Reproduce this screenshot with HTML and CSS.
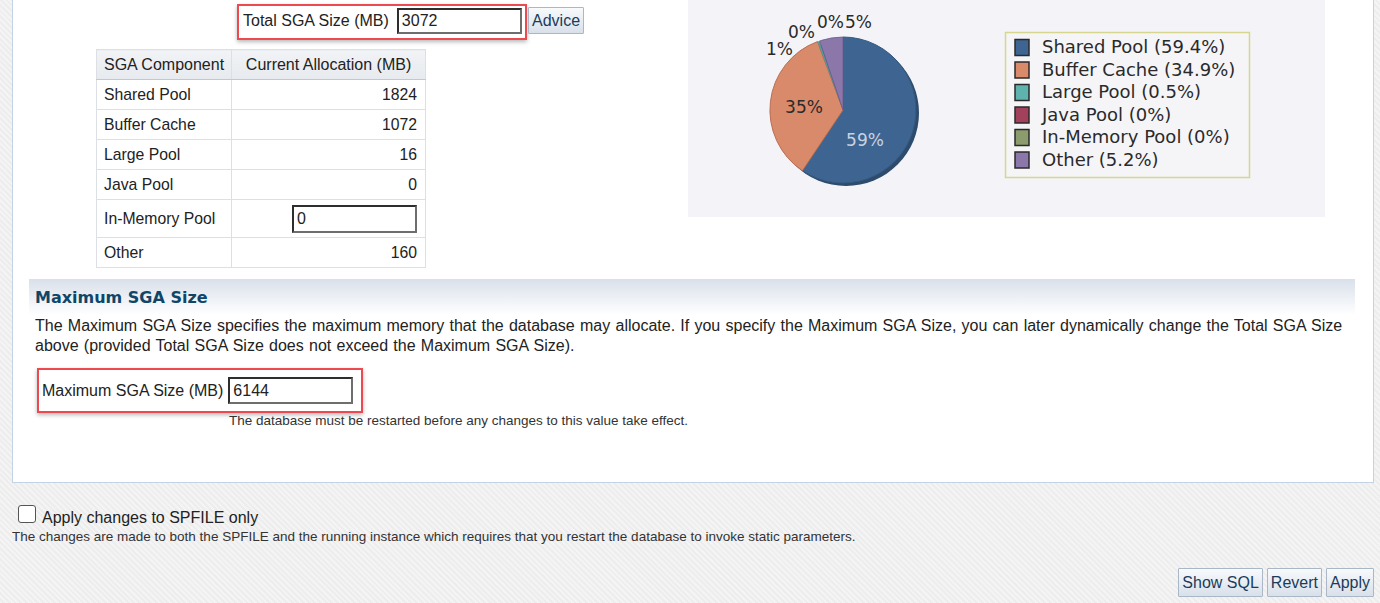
FILE: index.html
```html
<!DOCTYPE html>
<html>
<head>
<meta charset="utf-8">
<link rel="stylesheet" href="styles.css">
</head>
<body>
<div class="panel">
  <div class="top">
    <div class="left">
      <div class="total-row">
        <div class="hl-box total-box">
          <label class="lbl">Total SGA Size (MB)</label>
          <input class="field" type="text" value="3072">
        </div>
        <button class="btn">Advice</button>
      </div>
      <table class="sga">
        <thead>
          <tr><th class="c1">SGA Component</th><th class="c2">Current Allocation (MB)</th></tr>
        </thead>
        <tbody>
          <tr><td>Shared Pool</td><td class="num">1824</td></tr>
          <tr><td>Buffer Cache</td><td class="num">1072</td></tr>
          <tr><td>Large Pool</td><td class="num">16</td></tr>
          <tr><td>Java Pool</td><td class="num">0</td></tr>
          <tr class="tall"><td>In-Memory Pool</td><td class="num"><input class="field cell-field" type="text" value="0"></td></tr>
          <tr><td>Other</td><td class="num">160</td></tr>
        </tbody>
      </table>
    </div>
    <div class="chart">
      <svg class="chart-svg" width="637" height="217" viewBox="0 0 637 217">
        <circle cx="158" cy="113" r="73" fill="#2d4b6c"/>
        <path d="M155 110 L155 37 A73 73 0 1 1 114.4 170.7 Z" fill="#3e6591" stroke="#35597f" stroke-width="1"/>
        <path d="M155 110 L114.4 170.7 A73 73 0 0 1 129.4 41.6 Z" fill="#d98a6a" stroke="#b86e52" stroke-width="1"/>
        <path d="M155 110 L129.4 41.6 A73 73 0 0 1 131.6 40.9 Z" fill="#4f9e98"/>
        <path d="M155 110 L131.6 40.9 A73 73 0 0 1 155 37 Z" fill="#8b77aa" stroke="#6d5b8a" stroke-width="0.8"/>
        <g class="pie-lbl">
          <text x="177" y="146" text-anchor="middle" fill="#c9d2e2">59%</text>
          <text x="116" y="113" text-anchor="middle" fill="#2a2a2a">35%</text>
          <text x="78" y="55">1%</text>
          <text x="100" y="38">0%</text>
          <text x="129" y="28">0%</text>
          <text x="157" y="28">5%</text>
        </g>
        <rect x="317.5" y="32.5" width="244" height="145" fill="#f5f5f8" stroke="#d6d68e" stroke-width="1.5"/>
        <g class="swatch" stroke="#2a2a2a" stroke-width="1.5">
          <rect x="327" y="39.5" width="14" height="16" fill="#3e6591"/>
          <rect x="327" y="62" width="14" height="16" fill="#d98a6a"/>
          <rect x="327" y="84.5" width="14" height="16" fill="#5eb3ae"/>
          <rect x="327" y="107" width="14" height="16" fill="#a3405c"/>
          <rect x="327" y="129.5" width="14" height="16" fill="#8c9c6c"/>
          <rect x="327" y="152" width="14" height="16" fill="#8b77aa"/>
        </g>
        <g class="leg-lbl">
          <text x="354" y="53">Shared Pool (59.4%)</text>
          <text x="354" y="76">Buffer Cache (34.9%)</text>
          <text x="354" y="98">Large Pool (0.5%)</text>
          <text x="354" y="121">Java Pool (0%)</text>
          <text x="354" y="143">In-Memory Pool (0%)</text>
          <text x="354" y="166">Other (5.2%)</text>
        </g>
      </svg>
    </div>
  </div>
  <div class="section">
    <h2 class="section-head">Maximum SGA Size</h2>
    <p class="desc">The Maximum SGA Size specifies the maximum memory that the database may allocate. If you specify the Maximum SGA Size, you can later dynamically change the Total SGA Size above (provided Total SGA Size does not exceed the Maximum SGA Size).</p>
    <div class="hl-box max-box">
      <label class="lbl">Maximum SGA Size (MB)</label>
      <input class="field" type="text" value="6144">
    </div>
    <div class="hint">The database must be restarted before any changes to this value take effect.</div>
  </div>
</div>
<div class="footer">
  <label class="check"><input type="checkbox" class="cb"><span>Apply changes to SPFILE only</span></label>
  <div class="note">The changes are made to both the SPFILE and the running instance which requires that you restart the database to invoke static parameters.</div>
  <div class="actions">
    <button class="btn">Show SQL</button>
    <button class="btn">Revert</button>
    <button class="btn">Apply</button>
  </div>
</div>
</body>
</html>
```
FILE: styles.css
```css
html, body {
  margin: 0;
  padding: 0;
}
body {
  width: 1380px;
  height: 603px;
  overflow: hidden;
  font-family: "Liberation Sans", Arial, sans-serif;
  font-size: 16px;
  color: #222;
  background-color: #f1f1f1;
  background-image: repeating-linear-gradient(45deg, #f4f4f4 0 2px, #ededed 2px 4px);
}
.panel {
  margin-left: 12px;
  width: 1362px;
  height: 483px;
  box-sizing: border-box;
  background: #fff;
  border: 1px solid #c3d3e3;
  border-top: none;
}
.top {
  display: flex;
}
.left {
  width: 675px;
}
.total-row {
  display: flex;
  align-items: flex-start;
  margin-left: 224px;
  padding-top: 4px;
}
.hl-box {
  display: flex;
  align-items: center;
  border: 2px solid #ec4a50;
  box-shadow: 0 2px 4px rgba(0,0,0,0.28);
  box-sizing: border-box;
}
.total-box {
  width: 290px;
  height: 36px;
  padding: 0 5px 2px 4px;
}
.lbl {
  white-space: nowrap;
}
.total-box .lbl {
  margin-right: 8px;
}
.field {
  box-sizing: border-box;
  width: 125px;
  height: 26px;
  margin: 0;
  padding: 0 0 0 3px;
  border-style: solid;
  border-width: 2px;
  border-color: #2e2e2e #6e6e6e #6e6e6e #2e2e2e;
  font-family: "Liberation Sans", Arial, sans-serif;
  font-size: 16px;
  color: #222;
  background: #fff;
  outline: none;
}
.btn {
  box-sizing: border-box;
  height: 28px;
  margin: 0;
  padding: 0 3px;
  border: 1px solid #a9b7c7;
  border-radius: 1px;
  background: linear-gradient(#f8fafc, #d8e0ea);
  color: #1b3b5b;
  font-family: "Liberation Sans", Arial, sans-serif;
  font-size: 16px;
  cursor: pointer;
}
.total-row .btn {
  margin-top: 3px;
  margin-left: 1px;
  height: 27px;
}
.sga {
  margin-left: 83px;
  margin-top: 9px;
  border-collapse: collapse;
  width: 330px;
}
.sga th, .sga td {
  border: 1px solid #dcdfe3;
  padding: 0 7px;
  height: 29px;
  font-weight: normal;
  text-align: left;
  white-space: nowrap;
  font-size: 15.75px;
}
.sga thead th {
  background: linear-gradient(#f1f3f6, #e7eaee);
  border-bottom: 1px solid #c4c8ce;
  color: #222;
  font-size: 16px;
}
.sga thead th.c2 {
  text-align: center;
}
.sga .c1 {
  width: 120px;
}
.sga td.num {
  text-align: right;
  padding-right: 8px;
}
.sga tr.tall td {
  height: 37px;
}
.cell-field {
  height: 28px;
  vertical-align: middle;
}
.chart {
  width: 637px;
  height: 217px;
  background: #f4f4f8;
}
.chart-svg {
  display: block;
}
.pie-lbl text {
  font-family: "DejaVu Sans", sans-serif;
  font-size: 17px;
}
.pie-lbl text:not([fill]) {
  fill: #2a2a2a;
}
.leg-lbl text {
  font-family: "DejaVu Sans", sans-serif;
  font-size: 18px;
  fill: #2a2a2a;
}
.section {
  margin: 11px 0 0 16px;
  width: 1326px;
}
.section-head {
  margin: 0;
  height: 36px;
  line-height: 38px;
  padding-left: 6px;
  background: linear-gradient(#d9e0ea, #ffffff);
  font-family: "DejaVu Sans", sans-serif;
  font-weight: bold;
  font-size: 16px;
  color: #0f4668;
}
.desc {
  margin: 0;
  padding: 1px 0 0 6px;
  line-height: 20px;
  word-spacing: 0.8px;
}
.max-box {
  display: inline-flex;
  width: 326px;
  height: 45px;
  margin: 12px 0 0 8px;
  padding: 0 8px 0 3px;
}
.max-box .lbl {
  margin-right: 5px;
}
.max-box .field {
  height: 27px;
}
.hint {
  margin: 0 0 0 200px;
  font-size: 13.5px;
  line-height: 16px;
  color: #333;
}
.footer {
  display: flex;
  flex-direction: column;
  padding: 22px 6px 0 12px;
}
.check {
  display: flex;
  align-items: flex-end;
  font-size: 16px;
  line-height: 18px;
}
.cb {
  appearance: none;
  -webkit-appearance: none;
  width: 18px;
  height: 18px;
  margin: 0 6px 4px 6px;
  border: 1px solid #555;
  border-radius: 3px;
  background: #fff;
}
.note {
  margin-top: 2px;
  font-size: 13.5px;
  line-height: 16px;
  color: #333;
}
.actions {
  display: flex;
  justify-content: flex-end;
  gap: 4px;
  margin-top: 23px;
}
.actions .btn {
  height: 29px;
}
```
